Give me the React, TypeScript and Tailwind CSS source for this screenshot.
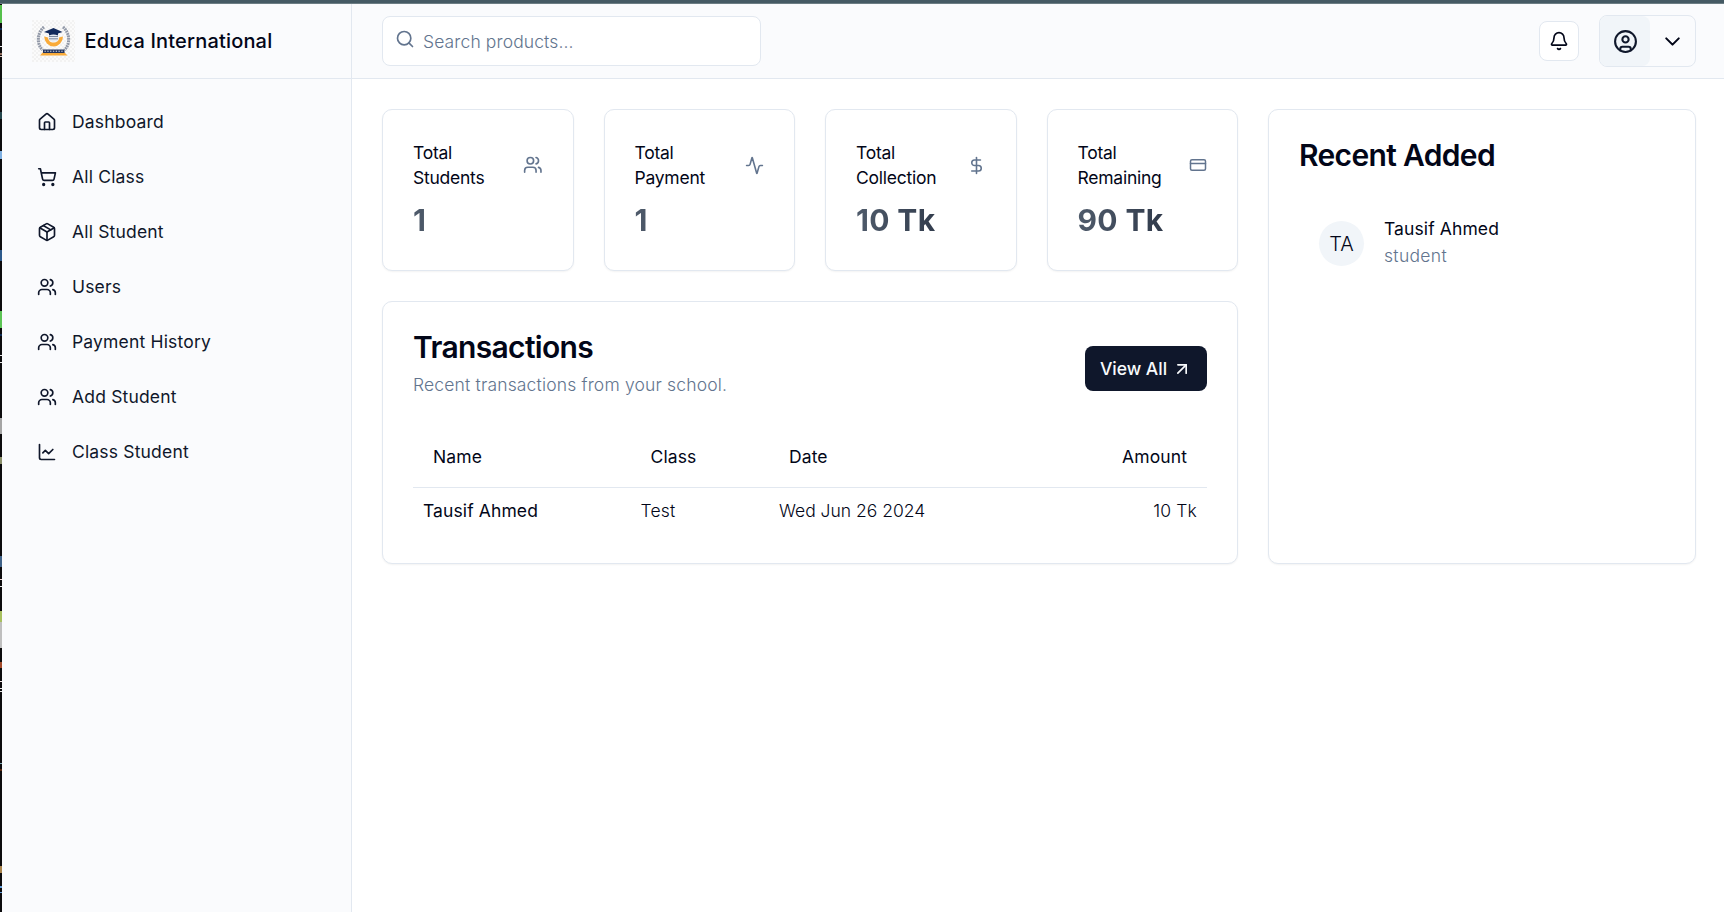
import React from "react";
import {
  Activity,
  ArrowUpRight,
  Bell,
  ChevronDown,
  CircleUser,
  CreditCard,
  DollarSign,
  House,
  LineChart,
  Package,
  Search,
  ShoppingCart,
  Users,
} from "lucide-react";

const navItems = [
  { label: "Dashboard", icon: House },
  { label: "All Class", icon: ShoppingCart },
  { label: "All Student", icon: Package },
  { label: "Users", icon: Users },
  { label: "Payment History", icon: Users },
  { label: "Add Student", icon: Users },
  { label: "Class Student", icon: LineChart },
];

const stats = [
  { title: ["Total", "Students"], value: "1", icon: Users, size: 19.6 },
  { title: ["Total", "Payment"], value: "1", icon: Activity, size: 19 },
  { title: ["Total", "Collection"], value: "10 Tk", icon: DollarSign, size: 19 },
  { title: ["Total", "Remaining"], value: "90 Tk", icon: CreditCard, size: 18 },
];

const edgeMarks = [
  { top: 5, height: 18, color: "#55c04c" },
  { top: 28, height: 2, color: "#0f2c55" },
  { top: 46, height: 1, color: "#e8e8e8" },
  { top: 53, height: 2, color: "#8d6a5a" },
  { top: 56, height: 1, color: "#d9c4b8" },
  { top: 112, height: 7, color: "#24464c" },
  { top: 151, height: 8, color: "#7fb0e2" },
  { top: 250, height: 11, color: "#2d5a8c" },
  { top: 311, height: 17, color: "#5cc455" },
  { top: 334, height: 2, color: "#0f2c55" },
  { top: 355, height: 1, color: "#e6e6e6" },
  { top: 362, height: 1, color: "#e6e6e6" },
  { top: 418, height: 16, color: "#a5a5a5" },
  { top: 457, height: 7, color: "#8a8f6a" },
  { top: 556, height: 11, color: "#3f6288" },
  { top: 579, height: 1, color: "#f3dada" },
  { top: 586, height: 1, color: "#e6e6e6" },
  { top: 611, height: 11, color: "#a8c060" },
  { top: 622, height: 26, color: "#bfbfbf" },
  { top: 662, height: 6, color: "#a34a2a" },
  { top: 681, height: 1, color: "#f3e6e6" },
  { top: 688, height: 1, color: "#e6e6e6" },
  { top: 691, height: 1, color: "#e6e6e6" },
  { top: 763, height: 1, color: "#7fa9b5" },
  { top: 769, height: 2, color: "#5a2a12" },
  { top: 866, height: 7, color: "#a8834c" },
  { top: 886, height: 2, color: "#5f9bd8" },
  { top: 892, height: 1, color: "#5f9bd8" },
];

const letters = [0, 1, 2, 3, 4, 5, 6];

function Logo() {
  return (
    <svg viewBox="0 0 43 42" className="h-[42px] w-[43px] shrink-0">
      <defs>
        <pattern id="check" width="4" height="4" patternUnits="userSpaceOnUse">
          <rect width="4" height="4" fill="#fbfbfb" />
          <rect width="2" height="2" fill="#f2f2f2" />
          <rect x="2" y="2" width="2" height="2" fill="#f2f2f2" />
        </pattern>
      </defs>
      <rect width="43" height="42" fill="url(#check)" />
      <g fill="none" stroke="#9299a8" strokeWidth="3" strokeDasharray="1.8 0.7">
        <path d="M12 7 C5 13 4.500 24 10.500 30" />
        <path d="M31 7 C38 13 38.500 24 32.500 30" />
      </g>
      <path d="M12.200 16.500 A9.400 10 0 0 0 31 16.500 L27 17.500 C27 21 25 22.500 21.500 22.500 C18 22.500 16.500 20.500 16 17.500 Z" fill="#f9ab3a" />
      <ellipse cx="21.500" cy="18" rx="5" ry="3.800" fill="#e6eaf1" />
      <path d="M17 16.500 H26 M17 18.800 H26" stroke="#7a879e" strokeWidth="1" />
      <path d="M12 12 L21.500 8 L30.500 12 L26 13.500 V15.500 Q21.500 13.500 17 15.500 V13.500 Z" fill="#122a5c" />
      <path d="M8 35.500 L11.500 31.500 H31.500 L35.500 35.500 Z" fill="#f9ab3a" />
      <rect x="11" y="29.500" width="21.500" height="3.500" fill="#26365e" />
      <g fill="#a9b2c6">
        {letters.map((i) => (
          <rect key={i} x={12.5 + i * 2.8} y="30.600" width="1.300" height="1.400" />
        ))}
      </g>
    </svg>
  );
}

const card = "rounded-[10px] border border-slate-200 bg-white shadow-[0_1px_2px_0_rgb(0_0_0/0.05)]";
const strong = "font-[440] tracking-[0.006em]";

export default function App() {
  return (
    <div className="flex h-[912px] w-full flex-col overflow-hidden bg-white font-['Inter',sans-serif] text-[17.5px] leading-[25px] font-[360] text-slate-950">
      <div className="h-1 shrink-0 border-b border-[#6c7d84] bg-[#455a64]" />
      <div className="flex min-h-0 flex-1">
        <div className="relative w-0.5 shrink-0 bg-[#0c0b0d]">
          {edgeMarks.map((m) => (
            <span
              key={m.top}
              className="absolute left-0 w-0.5"
              style={{ top: m.top - 4, height: m.height, background: m.color }}
            />
          ))}
        </div>

        <aside className="flex w-[350px] shrink-0 flex-col border-r border-slate-200 bg-[#fafbfd]">
          <div className="flex h-[75px] items-center gap-[9.5px] border-b border-slate-200 pl-[30px]">
            <Logo />
            <span className="text-[20px] font-[550] tracking-[0.009em]">Educa International</span>
          </div>
          <nav className="flex flex-col pt-[15.5px] pl-[35px]">
            {navItems.map(({ label, icon: Icon }) => (
              <a key={label} className="flex h-[55px] items-center gap-[15px] text-slate-900">
                <Icon size={20} />
                <span className="mb-0.5 font-[440] tracking-[0.01em]">{label}</span>
              </a>
            ))}
          </nav>
        </aside>

        <div className="flex min-w-0 flex-1 flex-col">
          <header className="flex h-[75px] shrink-0 items-center border-b border-slate-200 bg-[#fafbfd] pr-7 pl-[30px]">
            <div className="flex h-[50px] w-[379px] items-center gap-2 rounded-[8px] border border-slate-200 bg-white pl-3">
              <Search size={20} className="mb-1 text-slate-500" />
              <span className="tracking-[0.007em] text-slate-500">Search products...</span>
            </div>
            <button className="ml-auto flex size-10 items-center justify-center rounded-[8px] border border-slate-200 bg-white">
              <Bell size={20} />
            </button>
            <div className="ml-5 flex h-[52px] w-[97px] overflow-hidden rounded-[8px] border border-slate-200">
              <div className="flex w-[50px] items-center justify-center rounded-r-[8px] bg-slate-100">
                <CircleUser size={25} className="text-slate-900" />
              </div>
              <div className="flex flex-1 items-center justify-center pr-px">
                <ChevronDown size={25} />
              </div>
            </div>
          </header>

          <main className="grid grid-cols-[856px_428px] items-stretch gap-[30px] pt-[30px] pl-[30px]">
            <div className="flex flex-col gap-[30px]">
              <div className="grid grid-cols-4 gap-[30px]">
                {stats.map(({ title, value, icon: Icon, size }) => (
                  <section key={title[1]} className={`${card} h-[162px] p-[30px]`}>
                    <div className="flex items-center justify-between">
                      <h3 className="font-[440] tracking-[-0.014em]">
                        {title[0]}
                        <br />
                        {title[1]}
                      </h3>
                      <Icon size={size} className="text-slate-500" />
                    </div>
                    <p className="mt-2.5 bg-gradient-to-r from-[#4f5b6b] to-[#222b3c] bg-clip-text text-[30px] leading-10 font-bold tracking-[0.012em] text-transparent">
                      {value}
                    </p>
                  </section>
                ))}
              </div>

              <section className={`${card} h-[263px] px-[30px] pt-[30px]`}>
                <div className="flex h-[65px] items-start justify-between">
                  <div>
                    <h2 className="text-[30px] leading-[30px] font-[560] tracking-[-0.022em]">Transactions</h2>
                    <p className="mt-2.5 tracking-[0.0095em] text-slate-500">Recent transactions from your school.</p>
                  </div>
                  <button className="mt-3.5 flex h-[45px] w-[122px] items-center justify-center gap-[5px] rounded-[8px] bg-slate-900 font-medium text-slate-50">
                    View All
                    <ArrowUpRight size={20} />
                  </button>
                </div>
                <table className="mt-[30px] w-full table-fixed text-left">
                  <colgroup>
                    <col className="w-[217.5px]" />
                    <col className="w-[138.5px]" />
                    <col className="w-[260px]" />
                    <col />
                  </colgroup>
                  <thead>
                    <tr className={`${strong} h-[60px] border-b border-slate-200`}>
                      <th className="px-5 font-[440]">Name</th>
                      <th className="px-5 font-[440]">Class</th>
                      <th className="px-5 font-[440]">Date</th>
                      <th className="px-5 text-right font-[440]">Amount</th>
                    </tr>
                  </thead>
                  <tbody>
                    <tr className="h-[47px]">
                      <td className={`${strong} px-2.5`}>Tausif Ahmed</td>
                      <td className="px-2.5 tracking-[0.01em]">Test</td>
                      <td className="px-2.5">Wed Jun 26 2024</td>
                      <td className="px-2.5 text-right tracking-[0.01em]">10 Tk</td>
                    </tr>
                  </tbody>
                </table>
              </section>
            </div>

            <section className={`${card} p-[30px]`}>
              <h2 className="text-[30px] leading-[30px] font-[560] tracking-[-0.022em]">Recent Added</h2>
              <div className="mt-[46px] flex items-center gap-5 pl-5">
                <div className="mt-[3px] flex size-[45px] items-center justify-center rounded-full bg-slate-100 pt-px text-[20px]">
                  TA
                </div>
                <div className="flex flex-col gap-0.5">
                  <span className={strong}>Tausif Ahmed</span>
                  <span className="tracking-[0.018em] text-slate-500">student</span>
                </div>
              </div>
            </section>
          </main>
        </div>
      </div>
    </div>
  );
}
